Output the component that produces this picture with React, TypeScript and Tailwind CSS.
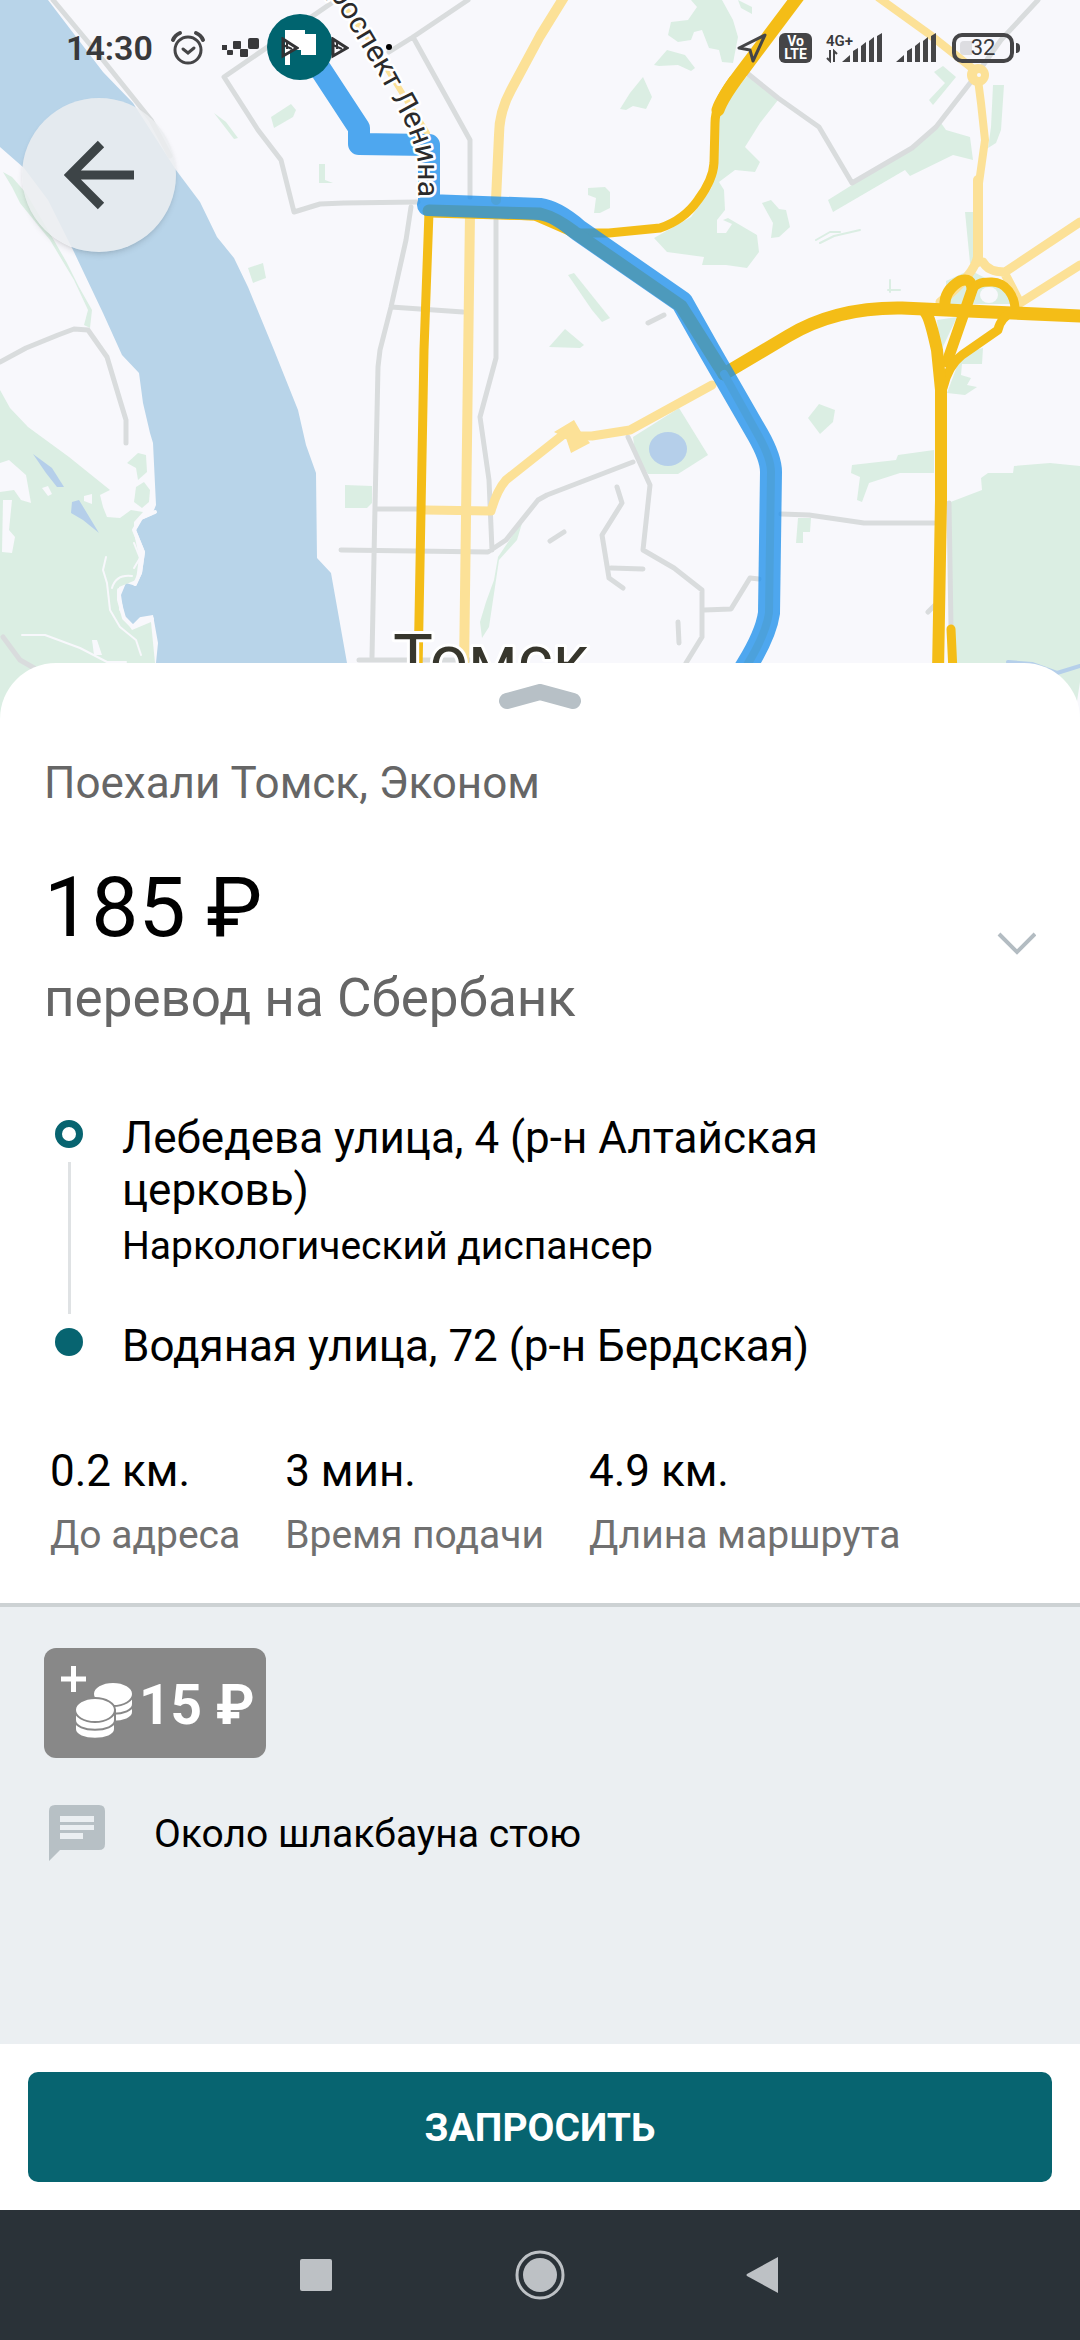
type Stop = { title: string; note?: string };

const stops: Stop[] = [
  { title: "Лебедева улица, 4 (р-н Алтайская церковь)", note: "Наркологический диспансер" },
  { title: "Водяная улица, 72 (р-н Бердская)" },
];

const stats = [
  { value: "0.2 км.", label: "До адреса" },
  { value: "3 мин.", label: "Время подачи" },
  { value: "4.9 км.", label: "Длина маршрута" },
];

const parks = [
  "3,172 12,177 26,193 52,237 67,263 79,287 92,310 90,328 84,325 88,310 74,280 50,240 20,203 12,187",
  "0,390 10,408 28,427 69,457 110,490 100,495 103,507 107,517 120,518 131,510 143,512 134,522 134,533 139,557 136,580 119,587 119,610 132,630 151,622 155,663 155,720 0,720",
  "127,463 138,453 146,455 147,472 138,480 136,468",
  "136,487 144,482 150,490 149,502 142,508 134,502",
  "691,0 722,0 733,20 738,37 733,63 722,62 719,50 709,48 702,30 694,32 691,40 678,42 668,35 671,22 688,20 697,7",
  "738,0 752,7 752,14 741,8",
  "654,65 667,50 685,55 695,68 691,71 678,65 659,66",
  "620,109 630,93 643,77 652,97 646,109 633,106 626,110",
  "748,75 778,100 760,123 745,147 760,162 755,172 735,170 719,182 724,190 725,210 717,220 717,233 726,233 732,224 723,220 728,218 757,235 759,252 747,268 726,265 702,265 704,257 667,252 654,238 691,217 712,187 717,113",
  "588,188 605,187 610,192 610,208 600,213 594,213 596,198 588,195",
  "762,203 771,200 779,209 786,210 790,227 779,237 771,238 773,223",
  "828,200 852,185 905,152 941,123 946,130 970,137 973,160 953,155 910,176 905,170 833,212",
  "934,72 943,66 956,77 933,105 929,100 945,83",
  "993,85 1004,85 1001,130 996,143 988,148 991,127",
  "965,212 973,212 974,267 970,263",
  "568,275 574,273 610,318 602,322 592,310",
  "549,347 565,329 584,345 580,348",
  "948,503 982,490 981,478 988,473 1013,473 1014,466 1050,463 1080,466 1080,720 953,720",
  "852,465 896,460 898,455 934,450 934,473 900,473 869,483 862,502 857,500 860,477 851,473",
  "819,404 835,410 833,422 820,434 808,418",
  "798,518 811,518 810,532 803,532 803,543 796,543",
  "633,437 679,408 708,455 678,474 648,474 635,453",
  "947,393 962,353 983,348 982,364 962,364 961,375 971,378 967,385 977,387 965,395",
  "937,320 957,317 940,353",
  "946,281 970,270 1008,290 1012,304 946,304",
  "523,520 517,540 499,560 489,627 482,638 480,622 486,602 494,580 498,557",
  "345,485 372,486 372,503 367,508 345,508",
  "248,268 263,263 266,278 253,283",
  "319,164 325,164 325,180 333,183 319,183",
  "271,117 291,104 296,110 293,117 274,128",
  "214,113 226,122 238,138 234,139",
];

const streets = [
  "M53 0 L103 60 L151 120 L170 156",
  "M336 0 L224 77 L258 130 L281 160 L294 212 L320 204 L344 203 L418 202",
  "M468 0 L413 37 L389 52 M413 37 L470 140 L470 197",
  "M411 207 L406 240 L391 307 L380 350 L378 367 L375 507 L372 657 M391 307 L463 312",
  "M496 220 L496 358 L480 417 L489 480 L492 550",
  "M377 509 L427 509 M341 550 L488 552 L506 540 L538 500 L547 495 L633 462",
  "M359 660 L470 660",
  "M0 362 L26 348 L58 335 L74 329 L88 330 L107 357 L119 397 L126 420 L126 443",
  "M3 637 L20 660 L34 668",
  "M747 73 L778 98 L819 127 L852 183 L912 148 L936 127 L974 78 L1001 40 L1038 0",
  "M648 323 L664 315 M550 541 L564 532 M678 622 L679 643 M928 612 L934 606",
  "M628 437 L650 485 L643 550 L674 568 L702 590 L702 637 L686 663",
  "M704 610 L731 609 L750 578 L759 579",
  "M617 487 L622 503 L602 535 L609 578 L623 588 M611 568 L643 569",
  "M781 514 L809 515 L864 523 L934 523",
  "M949 503 L951 627",
];

const route =
  "M300 38 L359 128 L359 144 L429 145 L429 204 M428 205 L540 209 Q556 211 578 230 L682 302 L709 350 L758 435 Q771 458 771 472 L769 613 Q766 634 747 665 L720 710";

function CityMap() {
  return (
    <svg
      className="block h-full w-full"
      viewBox="0 0 1080 720"
      preserveAspectRatio="xMidYMin slice"
      fontFamily="Roboto, sans-serif"
      fill="none"
      strokeLinecap="round"
      strokeLinejoin="round"
      role="img"
      aria-label="Маршрут на карте"
    >
      <rect width="1080" height="720" fill="#f8f8fc" />

      {/* Река */}
      <polygon
        fill="#b8d4e9"
        points="48,0 103,72 133,103 176,170 200,202 217,237 234,258 248,287 274,350 298,410 306,445 316,473 317,558 331,573 347,663 350,720 156,720 156,663 158,643 153,615 141,617 133,625 124,615 121,595 126,583 136,586 142,573 145,552 136,530 141,520 152,515 156,505 153,443 150,433 143,403 139,373 122,355 103,313 74,252 48,200 24,168 0,147 0,0"
      />
      {parks.map((points) => (
        <polygon key={points} points={points} fill="#dbeee3" />
      ))}
      <g fill="#f8f8fc">
        <polygon points="0,463 9,460 26,475 31,503 21,500 14,490 0,492" />
        <polygon points="3,500 12,500 9,530 15,537 12,553 2,552" />
        <polygon points="42,488 48,486 52,494 48,496" />
        <polygon points="84,496 92,494 92,504 84,501" />
        <polygon points="92,640 97,640 102,655 94,655" />
        <ellipse cx="989" cy="295" rx="9" ry="8" />
        <polygon points="1080,682 1074,720 1080,720" />
      </g>
      <g stroke="#f8f8fc" strokeWidth="2">
        <path d="M22 635 H45 L80 648 L107 662 H126" />
        <path d="M106 557 L103 570 L107 583 L110 610 L120 627 L136 640 L141 655" />
        <path d="M112 588 Q116 574 132 576 M134 543 L140 558 L134 568" />
      </g>
      {/* Песчаный берег */}
      <path
        d="M155 512 L141 518 L134 530 L143 552 L140 573 L135 584 M119 590 L119 600 L124 618 L133 627 L141 619 L152 619"
        stroke="#f8f8fc"
        strokeWidth="4"
      />
      <g fill="#b5cfea">
        <polygon points="33,454 52,468 64,487 57,487 46,473" />
        <polygon points="72,502 79,500 99,533 83,520 71,513" />
        <ellipse cx="668" cy="449" rx="19" ry="17" />
      </g>
      <path d="M1008 662 L1032 664 L1057 673 L1080 666" stroke="#b5cfea" strokeWidth="4" />
      <path d="M816 240 L830 232 H840 M820 243 L834 236 L860 230 M890 280 V292 M888 290 H900" stroke="#dbeee3" strokeWidth="2" />

      {/* Улицы */}
      <path d={streets.join(" ")} stroke="#d9dcdd" strokeWidth="5" />

      {/* Дороги */}
      <g stroke="#fce197" strokeWidth="9">
        <path d="M470 213 L464 670" strokeWidth="10" />
        <path d="M566 -6 L540 36 L511 90 Q499 112 499 135 L496 200" strokeWidth="10" />
        <path d="M344 7 L365 33 L427 133" strokeWidth="6" />
        <path d="M425 510 L491 511 Q497 490 506 480 L564 434 L574 436 L592 436 L630 430 L712 385" />
        <polygon points="554,432 574,420 581,432 590,443 571,453 566,438" fill="#fce197" stroke="none" />
        <path d="M879 -2 L929 34 L977 72 L981 103 L985 140 L979 183 L978 262" strokeWidth="8" />
        <path d="M978 180 V262" strokeWidth="10" />
        <path d="M978 255 Q975 275 940 302 M983 262 Q988 272 1005 272 L1080 222 M1005 274 L1020 303 L1080 265" strokeWidth="9" />
        <circle cx="978" cy="75" r="11" fill="#fce197" stroke="none" />
      </g>
      <circle cx="979" cy="75" r="2" fill="#f8f8fc" />
      <g stroke="#f4bd17" strokeWidth="9">
        <path d="M429 212 L424 350 L418 672" />
        <path d="M429 212 L535 216 L574 233 H609 L660 228 Q684 220 698 200 Q713 180 714 163 L715 123 Q715 105 733 80" />
        <path d="M800 -6 L740 74 Q722 98 718 110" strokeWidth="13" />
        <path d="M429 211 L540 214 Q556 218 574 232 L681 306 L724 374" strokeWidth="13" />
        <path d="M724 374 L788 336 Q836 307 902 308 L1080 316" strokeWidth="13" />
        <path d="M945 306 C944 292 955 284 960 281 Q972 277 972 290 L947 362" strokeWidth="11" />
        <path d="M970 298 C972 281 985 282 992 282 C1006 282 1015 296 1015 310 Q1000 318 998 330 L962 355 Q948 366 943 388" strokeWidth="9" />
        <path d="M926 313 Q930 318 937 350 L941 390 L941 500 L938 672" strokeWidth="12" />
        <path d="M951 629 L953 672" />
      </g>
      <path d="M724 374 L758 435 Q771 458 771 472 L769 613 Q766 634 747 665" stroke="#f0dfa8" strokeWidth="8" />

      {/* Подписи */}
      <text x="393" y="682" fontSize="67" fill="#37362c" stroke="#fff" strokeWidth="6" paintOrder="stroke">
        Томск
      </text>

      {/* Маршрут заказа */}
      <path d={route} stroke="#1e90ea" strokeOpacity="0.78" strokeWidth="22" />
      <path id="lenina" d="M286 -76 L344 17 L377 72 L397 108 Q416 142 418 165 L418 197" />
      <text fontSize="30" fill="#2b2b2b" stroke="#fff" strokeWidth="5" paintOrder="stroke">
        <textPath href="#lenina" startOffset="100%" textAnchor="end">
          Проспект Ленина
        </textPath>
      </text>
      <circle cx="300" cy="47" r="33" fill="#00646f" />
      <path d="M285 30 H305 V34 H316 V55 H301 V50 H290 V65 H285 Z" fill="#fff" />
      <circle cx="389" cy="47" r="3" fill="#000" />
    </svg>
  );
}

function SignalIcon() {
  return (
    <svg className="h-[30px] w-10" viewBox="0 0 40 30" fill="#454547">
      <path d="M0 29 L8 22 V29 Z M11 29 V18 L16 15 V29 Z M19 29 V13 L24 9 V29 Z M27 29 V8 L32 4 V29 Z M35 29 V3 L40 0 V29 Z" />
    </svg>
  );
}

function AppGlyph() {
  return (
    <svg className="h-[22px] w-[18px]" viewBox="0 0 18 22" fill="none" stroke="#333335" strokeWidth="3">
      <path d="M2 2 L16 11 L2 19 Z" />
      <path d="M2 8 L11 12 M6 4 V12" strokeWidth="2" />
    </svg>
  );
}

function StatusBar() {
  return (
    <header className="absolute inset-x-0 top-0 flex h-24 items-center justify-between pr-[60px] pl-[66px] text-[#39393b]">
      <div className="flex items-center">
        <time className="w-[88px] text-[34px] leading-10 font-semibold">14:30</time>
        <svg className="ml-4 h-9 w-9" viewBox="0 0 36 36" fill="none" stroke="#454547" strokeWidth="3" strokeLinecap="round">
          <circle cx="18" cy="20" r="13" />
          <path d="M3 10 Q5 5 10 3 M33 10 Q31 5 26 3" strokeWidth="4" />
          <path d="M13 19 L18 23 L24 18" />
        </svg>
        <svg className="ml-4 h-5 w-[38px]" viewBox="0 0 38 20" fill="#39393b">
          <rect x="0" y="7" width="5" height="5" />
          <rect x="5" y="12" width="6" height="5" rx="1" />
          <rect x="11" y="3" width="8" height="8" rx="1" />
          <rect x="18" y="11" width="8" height="8" rx="1" />
          <rect x="26" y="0" width="11" height="11" rx="2" />
        </svg>
        <div className="ml-[21px] flex gap-8">
          <AppGlyph />
          <AppGlyph />
        </div>
      </div>
      <div className="flex items-center">
        <svg className="h-8 w-8" viewBox="0 0 32 32" fill="none" stroke="#454547" strokeWidth="3" strokeLinejoin="round">
          <path d="M29 3 L3 16 L14 18 L17 29 Z" />
        </svg>
        <div className="ml-[11px] flex h-[30px] w-[33px] flex-col items-center justify-center rounded-md bg-[#454547] text-[14px] leading-[13px] font-bold text-white">
          <span>Vo</span>
          <span>LTE</span>
        </div>
        <div className="ml-[14px] flex h-[30px] items-end">
          <div className="flex w-4 flex-col">
            <span className="text-[15px] leading-4 font-semibold">4G+</span>
            <svg className="h-[14px] w-3" viewBox="0 0 12 14" fill="none" stroke="#454547" strokeWidth="2">
              <path d="M4 1 V12 L1 9 M8 13 V2 L11 5" />
            </svg>
          </div>
          <SignalIcon />
          <div className="ml-[14px] flex">
            <SignalIcon />
          </div>
        </div>
        <div className="ml-4 flex items-center gap-[2px]">
          <div className="relative flex h-[30px] w-[62px] items-center justify-center rounded-[10px] border-4 border-[#454547]">
            <span className="absolute inset-y-1 left-1 w-3 rounded-l-sm bg-[#454547]/15" />
            <span className="relative text-[22px] leading-6">32</span>
          </div>
          <span className="h-[10px] w-1 rounded-r-sm bg-[#454547]" />
        </div>
      </div>
    </header>
  );
}

function Route() {
  return (
    <ol className="mt-[83px] text-black">
      {stops.map((stop, i) => {
        const last = i === stops.length - 1;
        return (
          <li key={stop.title} className="flex gap-[39px] pl-[11px]">
            <div className="flex w-7 shrink-0 flex-col items-center pt-2">
              {last ? (
                <span className="size-7 rounded-full bg-[#076470]" />
              ) : (
                <>
                  <span className="size-7 rounded-full border-[7px] border-[#076470]" />
                  <span className="mt-[14px] mb-[6px] w-[3px] flex-1 bg-[#dfe2e4]" />
                </>
              )}
            </div>
            <div className={last ? "max-w-[760px]" : "max-w-[760px] pb-[51px]"}>
              <p className="text-[44px] leading-[52px]">{stop.title}</p>
              {stop.note && <p className="mt-[7px] text-[39px] leading-[46px]">{stop.note}</p>}
            </div>
          </li>
        );
      })}
    </ol>
  );
}

export default function App() {
  return (
    <div className="flex min-h-screen flex-col bg-white font-['Roboto','Noto_Sans',sans-serif]">
      <section className="relative h-[720px] overflow-hidden">
        <CityMap />
        <StatusBar />
        <button
          type="button"
          aria-label="Назад"
          className="absolute top-[98px] left-[22px] flex size-[154px] items-center justify-center rounded-full bg-[#ebedf0]/85 shadow-md"
        >
          <svg className="h-[70px] w-[70px]" viewBox="0 0 70 70" fill="none" stroke="#3d4447" strokeWidth="9">
            <path d="M70 35 H8 M37 4 L6 35 L37 66" />
          </svg>
        </button>
      </section>

      <main className="relative -mt-[57px] flex grow flex-col rounded-t-[56px] bg-white">
        <section className="border-b-4 border-[#cdd2d4] px-11 pb-[45px]">
          <button type="button" aria-label="Развернуть" className="mx-auto block h-[94px] pt-[21px] pb-[47px]">
            <svg className="h-[26px] w-[84px]" viewBox="0 0 84 26" fill="none" stroke="#b7c0c6" strokeWidth="16" strokeLinecap="round">
              <path d="M9 17 L42 8 L75 17" />
            </svg>
          </button>
          <h1 className="text-[44px] leading-[52px] text-[#666]">Поехали Томск, Эконом</h1>
          <div className="mt-[50px] flex items-center justify-between">
            <div>
              <p className="text-[84px] leading-[98px] text-black">185 ₽</p>
              <p className="mt-[10px] text-[53px] leading-[62px] text-[#666]">перевод на Сбербанк</p>
            </div>
            <button type="button" aria-label="Подробнее о цене">
              <svg className="h-6 w-10" viewBox="0 0 40 24" fill="none" stroke="#b3bcc2" strokeWidth="4">
                <path d="M3 2 L21 20 L39 2" />
              </svg>
            </button>
          </div>

          <Route />

          <dl className="mt-[73px] flex gap-[45px] pl-[6px]">
            {stats.map((stat) => (
              <div key={stat.label} className="flex flex-col-reverse">
                <dt className="mt-[15px] text-[39px] leading-[46px] text-[#707070]">{stat.label}</dt>
                <dd className="text-[44px] leading-[52px] text-black">{stat.value}</dd>
              </div>
            ))}
          </dl>
        </section>

        <section className="grow bg-[#ebeff2] px-11 pt-[41px]">
          <div className="flex h-[110px] w-[222px] items-center rounded-xl bg-[#888]">
            <svg className="h-[110px] w-[95px] shrink-0" viewBox="0 0 95 110" fill="#fff" stroke="#888" strokeWidth="2">
              <path d="M17 31 H42 M29.5 18 V44" stroke="#fff" strokeWidth="5" />
              <path d="M49 56 V64 C49 77 89 77 89 64 V56 Z" />
              <path d="M49 46 V56 C49 69 89 69 89 56 V46 Z" />
              <ellipse cx="69" cy="46" rx="20" ry="12" />
              <path d="M31 73 V81 C31 94 71 94 71 81 V73 Z" />
              <path d="M31 62 V72 C31 85 71 85 71 72 V62 Z" />
              <ellipse cx="51" cy="62" rx="20" ry="12" />
            </svg>
            <span className="pt-1 text-[55px] leading-[64px] font-bold whitespace-nowrap text-white">15 ₽</span>
          </div>
          <div className="mt-[47px] flex items-center gap-[49px] pl-[5px]">
            <svg className="h-14 w-14 shrink-0" viewBox="0 0 56 56" fill="#b7c0c5">
              <path
                fillRule="evenodd"
                d="M6 0 H50 Q56 0 56 6 V39 Q56 45 50 45 H11 L0 56 V6 Q0 0 6 0 Z M11 11 V17 H45 V11 Z M11 20 V25 H45 V20 Z M11 28 V34 H34 V28 Z"
              />
            </svg>
            <p className="pt-[2px] text-[39px] leading-[46px] text-black">Около шлакбауна стою</p>
          </div>
        </section>

        <footer className="bg-white p-7">
          <button
            type="button"
            className="h-[110px] w-full rounded-[10px] bg-[#076470] pt-[2px] text-[39px] leading-[46px] font-bold text-white"
          >
            ЗАПРОСИТЬ
          </button>
        </footer>
      </main>

      <nav aria-label="Системная навигация" className="flex h-[130px] items-center justify-center gap-[181px] bg-[#2a3238]">
        <button type="button" aria-label="Недавние">
          <svg className="h-[50px] w-9" viewBox="0 0 36 50" fill="#bdc1c5">
            <rect x="2" y="9" width="32" height="32" rx="2" />
          </svg>
        </button>
        <button type="button" aria-label="Домой">
          <svg className="h-[50px] w-[50px]" viewBox="0 0 50 50" fill="#bdc1c5">
            <circle cx="25" cy="25" r="17" />
            <circle cx="25" cy="25" r="23" fill="none" stroke="#bdc1c5" strokeWidth="3" />
          </svg>
        </button>
        <button type="button" aria-label="Назад в системе">
          <svg className="h-[50px] w-9" viewBox="0 0 36 50" fill="#bdc1c5">
            <path d="M32 7 V43 L1 26 Q0 25 1 24 Z" />
          </svg>
        </button>
      </nav>
    </div>
  );
}
